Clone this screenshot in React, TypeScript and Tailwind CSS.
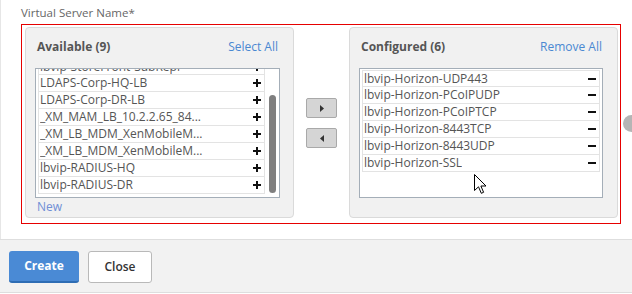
import React from "react";

const available = [
  "lbvip-StoreFront-SubRepl",
  "LDAPS-Corp-HQ-LB",
  "LDAPS-Corp-DR-LB",
  "_XM_MAM_LB_10.2.2.65_84...",
  "_XM_LB_MDM_XenMobileM...",
  "_XM_LB_MDM_XenMobileM...",
  "lbvip-RADIUS-HQ",
  "lbvip-RADIUS-DR",
];

const configured = [
  "lbvip-Horizon-UDP443",
  "lbvip-Horizon-PCoIPUDP",
  "lbvip-Horizon-PCoIPTCP",
  "lbvip-Horizon-8443TCP",
  "lbvip-Horizon-8443UDP",
  "lbvip-Horizon-SSL",
];

function PlusIcon() {
  return (
    <svg width="8" height="8" viewBox="0 0 8 8" className="shrink-0">
      <rect x="3" y="0" width="2" height="8" fill="#111" />
      <rect x="0" y="3" width="8" height="2" fill="#111" />
    </svg>
  );
}

function MinusIcon() {
  return (
    <svg width="8" height="2" viewBox="0 0 8 2" className="shrink-0">
      <rect x="0" y="0" width="8" height="2" fill="#111" />
    </svg>
  );
}

function Row({ label, first, kind }: { label: string; first?: boolean; kind: "add" | "remove" }) {
  return (
    <div
      className={`flex h-[17px] items-center justify-between border-x border-b border-[#e3e3e3] bg-white pl-[1px] pr-[3px] ${first ? "border-t" : ""}`}
    >
      <span className="truncate text-[12px] leading-[16px] text-[#555]">{label}</span>
      {kind === "add" ? <PlusIcon /> : <MinusIcon />}
    </div>
  );
}

function Panel({ title, action, children, footer }: { title: string; action: string; children: React.ReactNode; footer?: React.ReactNode }) {
  return (
    <div className="h-[191px] w-[269px] shrink-0 rounded-[4px] border border-[#dadada] bg-[#f1f1f1] pt-[11px]">
      <div className="flex items-center justify-between pl-[11px] pr-[15px] text-[12px] leading-[16px]">
        <span className="font-bold text-[#555]">{title}</span>
        <span className="text-[#4a88d2]">{action}</span>
      </div>
      <div className="ml-[9px] mt-[13px]">{children}</div>
      {footer}
    </div>
  );
}

function Cursor() {
  return (
    <svg className="absolute left-[474px] top-[174px]" width="14" height="21" viewBox="0 0 14 21">
      <path d="M0.5 0.5 L0.5 16.5 L4.5 12.8 L7.3 19.3 L9.6 18.3 L6.9 12 L12 12 Z" fill="#fff" stroke="#000" strokeWidth="1" strokeLinejoin="miter" />
    </svg>
  );
}

export default function App() {
  return (
    <div className="relative h-[294px] w-[632px] overflow-hidden bg-white font-['Open_Sans','Liberation_Sans',sans-serif]">
      <div className="h-[239px] border-l border-[#e6e6e6] pl-[20px] pt-[5px]">
        <div className="h-[19px] text-[11.5px] leading-[16px] text-[#666]">Virtual Server Name*</div>
        <div className="flex h-[200px] w-[600px] items-start border border-[#e60000] pl-[3px] pt-[2px]">
          <Panel
            title="Available (9)"
            action="Select All"
            footer={<div className="mt-[1px] pl-[11px] text-[12px] leading-[16px] text-[#6f8fd6]">New</div>}
          >
            <div className="flex h-[130px] w-[245px] items-start overflow-hidden border border-[#a4aeb8] bg-white pl-[2px]">
              <div className="-mt-[11px] w-[227px] shrink-0">
                {available.map((item, i) => (
                  <Row key={i} label={item} first={i === 0} kind="add" />
                ))}
              </div>
              <div className="ml-[4px] mt-[26px] h-[98px] w-[7px] shrink-0 rounded-[4px] bg-[#7f7f7f]" />
            </div>
          </Panel>

          <div className="flex w-[55px] shrink-0 flex-col gap-[10px] pl-[12px] pt-[71px]">
            <button className="flex h-[20px] w-[31px] items-center justify-center rounded-[2px] border border-[#a9a9a9] bg-[#d5d5d5]">
              <svg width="4" height="7" viewBox="0 0 4 7"><path d="M0 0 L4 3.5 L0 7 Z" fill="#333" /></svg>
            </button>
            <button className="flex h-[20px] w-[31px] items-center justify-center rounded-[2px] border border-[#a9a9a9] bg-[#d5d5d5]">
              <svg width="4" height="7" viewBox="0 0 4 7"><path d="M4 0 L0 3.5 L4 7 Z" fill="#333" /></svg>
            </button>
          </div>

          <Panel title="Configured (6)" action="Remove All">
            <div className="h-[130px] w-[244px] overflow-hidden border border-[#a4aeb8] bg-white pl-[2px] pt-[1px]">
              <div className="w-[238px]">
                {configured.map((item, i) => (
                  <Row key={i} label={item} first={i === 0} kind="remove" />
                ))}
              </div>
            </div>
          </Panel>
        </div>
      </div>

      <div className="flex h-[54px] items-start gap-[9px] border-y border-[#dedede] bg-[#f2f2f2] pl-[9px] pt-[11px]">
        <button className="h-[32px] w-[70px] rounded-[3px] border-b-2 border-[#2e6db4] bg-[#4a8ad5] text-[12px] font-bold text-white">
          Create
        </button>
        <button className="h-[32px] w-[64px] rounded-[3px] border border-[#b9b9b9] bg-white text-[12px] font-semibold text-[#333]">
          Close
        </button>
      </div>

      <div className="absolute left-[623px] top-[115px] h-[17px] w-[17px] rounded-full bg-[#b5b5b5]" />
      <Cursor />
    </div>
  );
}
